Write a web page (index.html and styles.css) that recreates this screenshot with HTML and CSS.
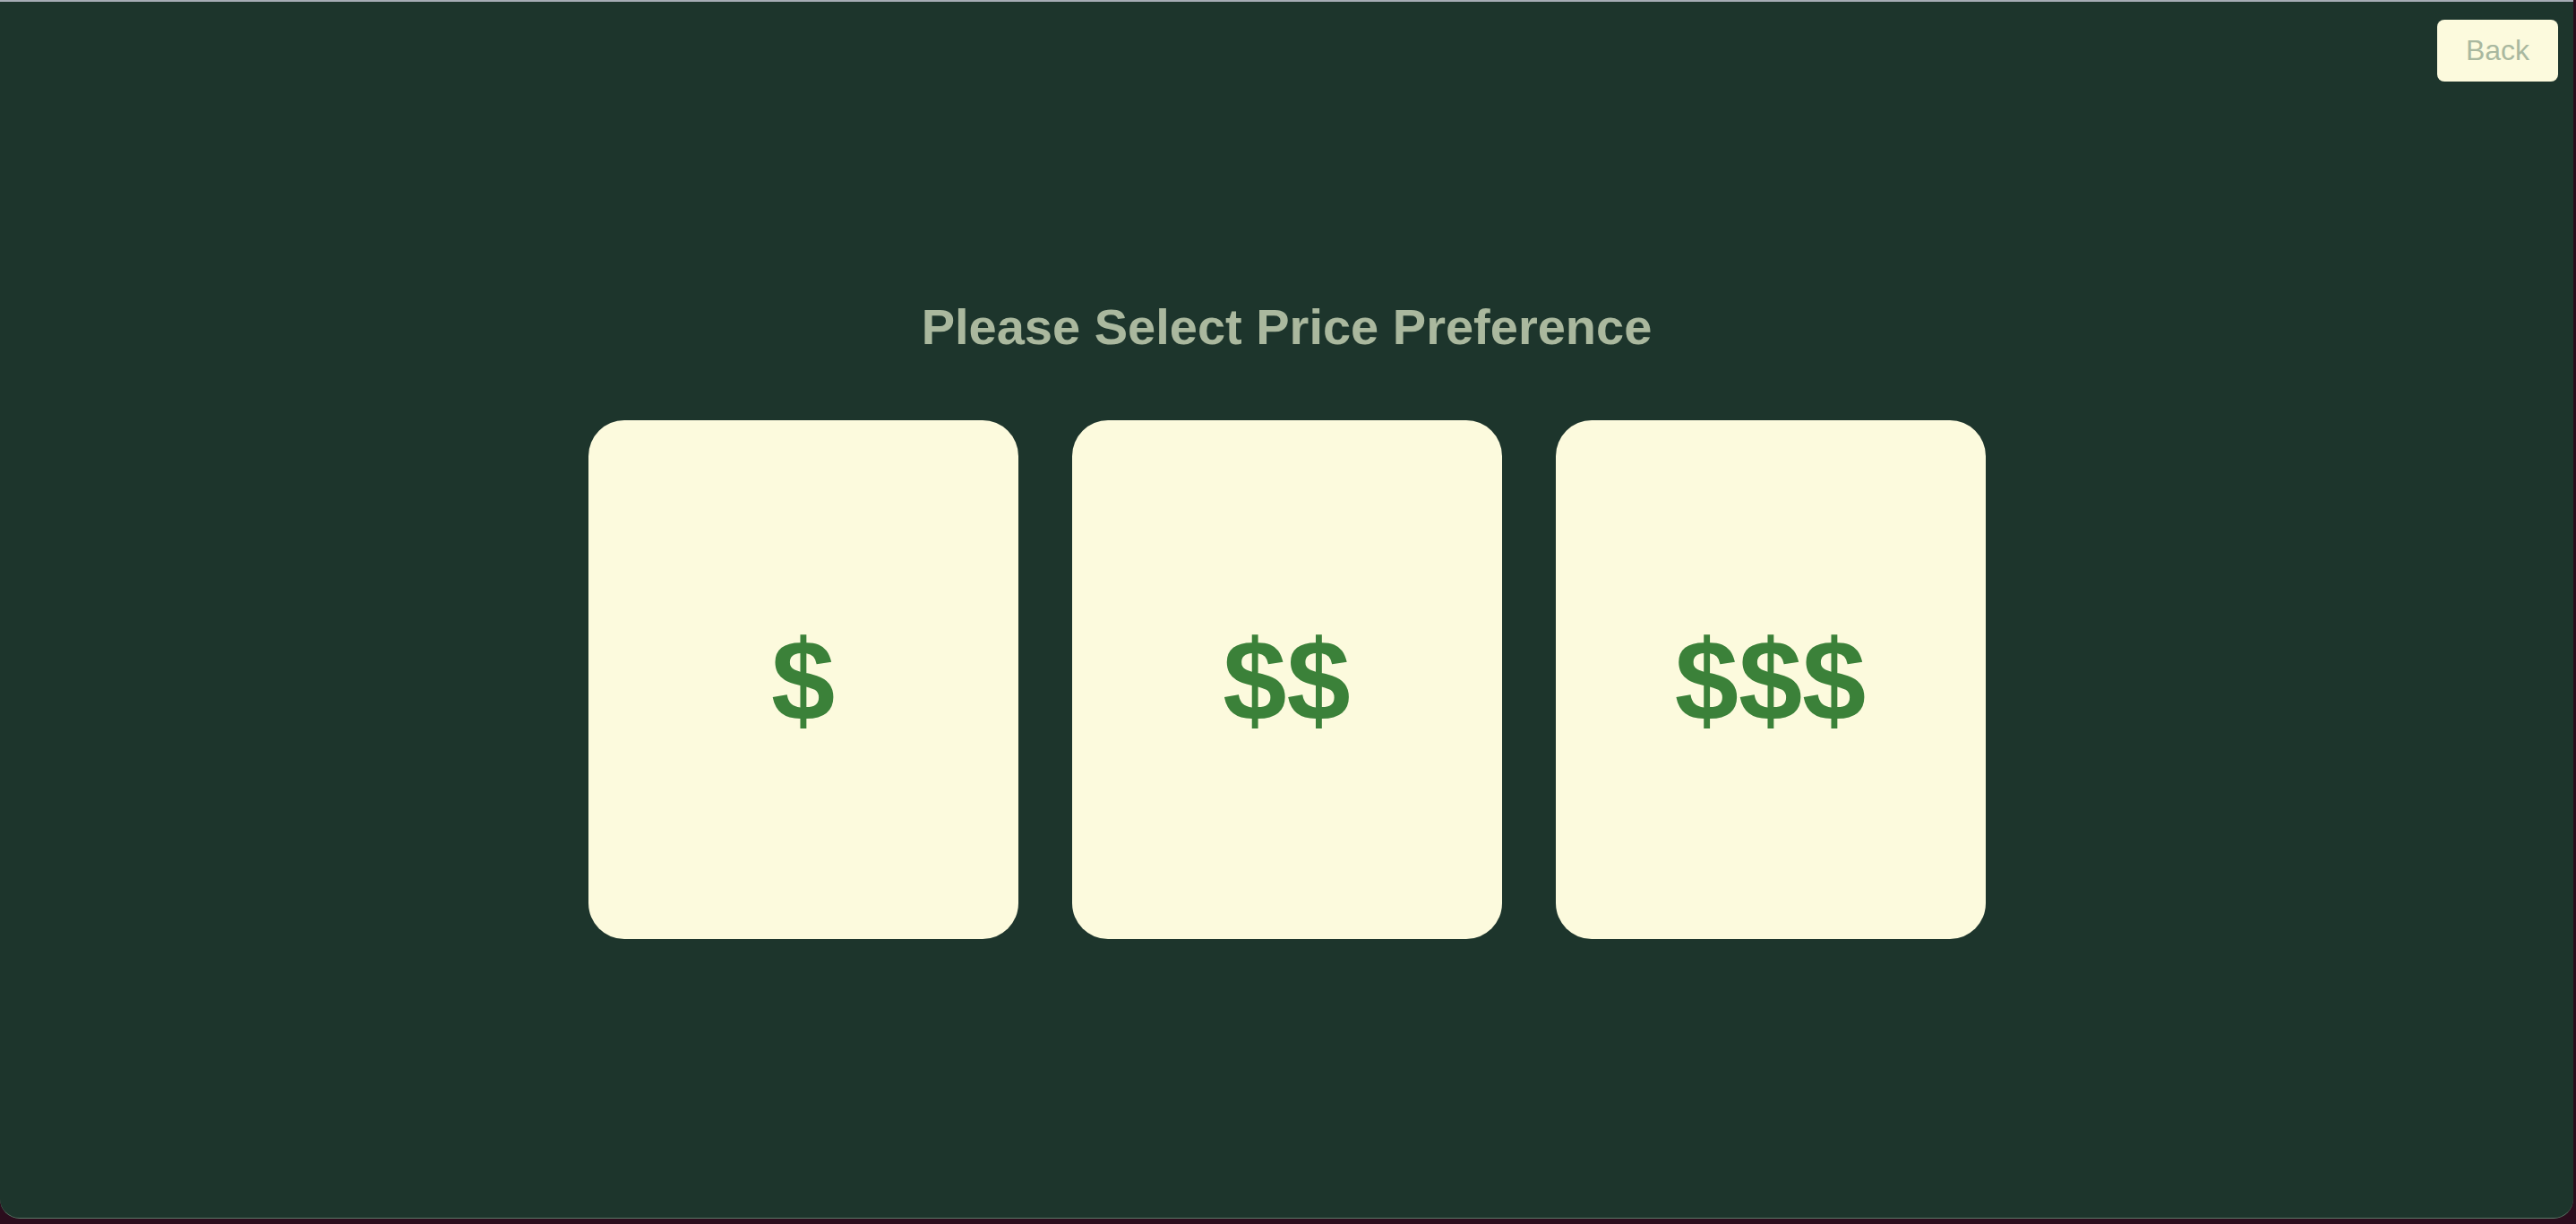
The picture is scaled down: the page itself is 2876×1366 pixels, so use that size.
FILE: index.html
```html
<!DOCTYPE html>
<html lang="en">

<head>
    <meta charset="UTF-8">
    <meta name="viewport" content="width=device-width, initial-scale=1.0">
    <title>Price Preference</title>
    <link rel="stylesheet" href="styles.css">
</head>

<body>

    <div class="window">
        <div class="topbar">
            <button class="back">Back</button>
        </div>

        <div class="picker">
            <h1 class="title">Please Select Price Preference</h1>

            <div class="options">
                <button class="option" onclick="pick(1)">$</button>
                <button class="option" onclick="pick(2)">$$</button>
                <button class="option" onclick="pick(3)">$$$</button>
            </div>
        </div>
    </div>

    <script>
        function pick(level) {
            console.log('price level', level);
        }
    </script>

</body>

</html>
```

FILE: styles.css
```css
body {
    margin: 0;
    font-family: "Liberation Sans", Arial, sans-serif;
    background-color: #2b0d1d;
    height: 1366px;
    overflow: hidden;
}

.window {
    width: 2873px;
    height: 1357px;
    background-color: #1d352c;
    border-top: 2px solid #a6acb5;
    border-bottom: 1px solid #5d7b69;
    border-radius: 0 0 22px 22px;
    display: flex;
    flex-direction: column;
}

.topbar {
    display: flex;
    justify-content: flex-end;
    padding: 20px 17px 0 0;
}

.back {
    width: 135px;
    height: 69px;
    background-color: #fcfadd;
    color: #a9b89f;
    font-family: "Liberation Sans", Arial, sans-serif;
    font-size: 32px;
    border: none;
    border-radius: 8px;
    cursor: pointer;
}

.picker {
    display: flex;
    flex-direction: column;
    align-items: center;
    margin-top: 241px;
}

.title {
    margin: 0 0 72px;
    font-size: 56px;
    font-weight: bold;
    color: #aab89e;
}

.options {
    display: flex;
    gap: 60px;
}

.option {
    width: 480px;
    height: 579px;
    background-color: #fcfadd;
    color: #3b8139;
    font-family: "Liberation Sans", Arial, sans-serif;
    font-size: 128px;
    font-weight: bold;
    border: none;
    border-radius: 40px;
    cursor: pointer;
}
```
